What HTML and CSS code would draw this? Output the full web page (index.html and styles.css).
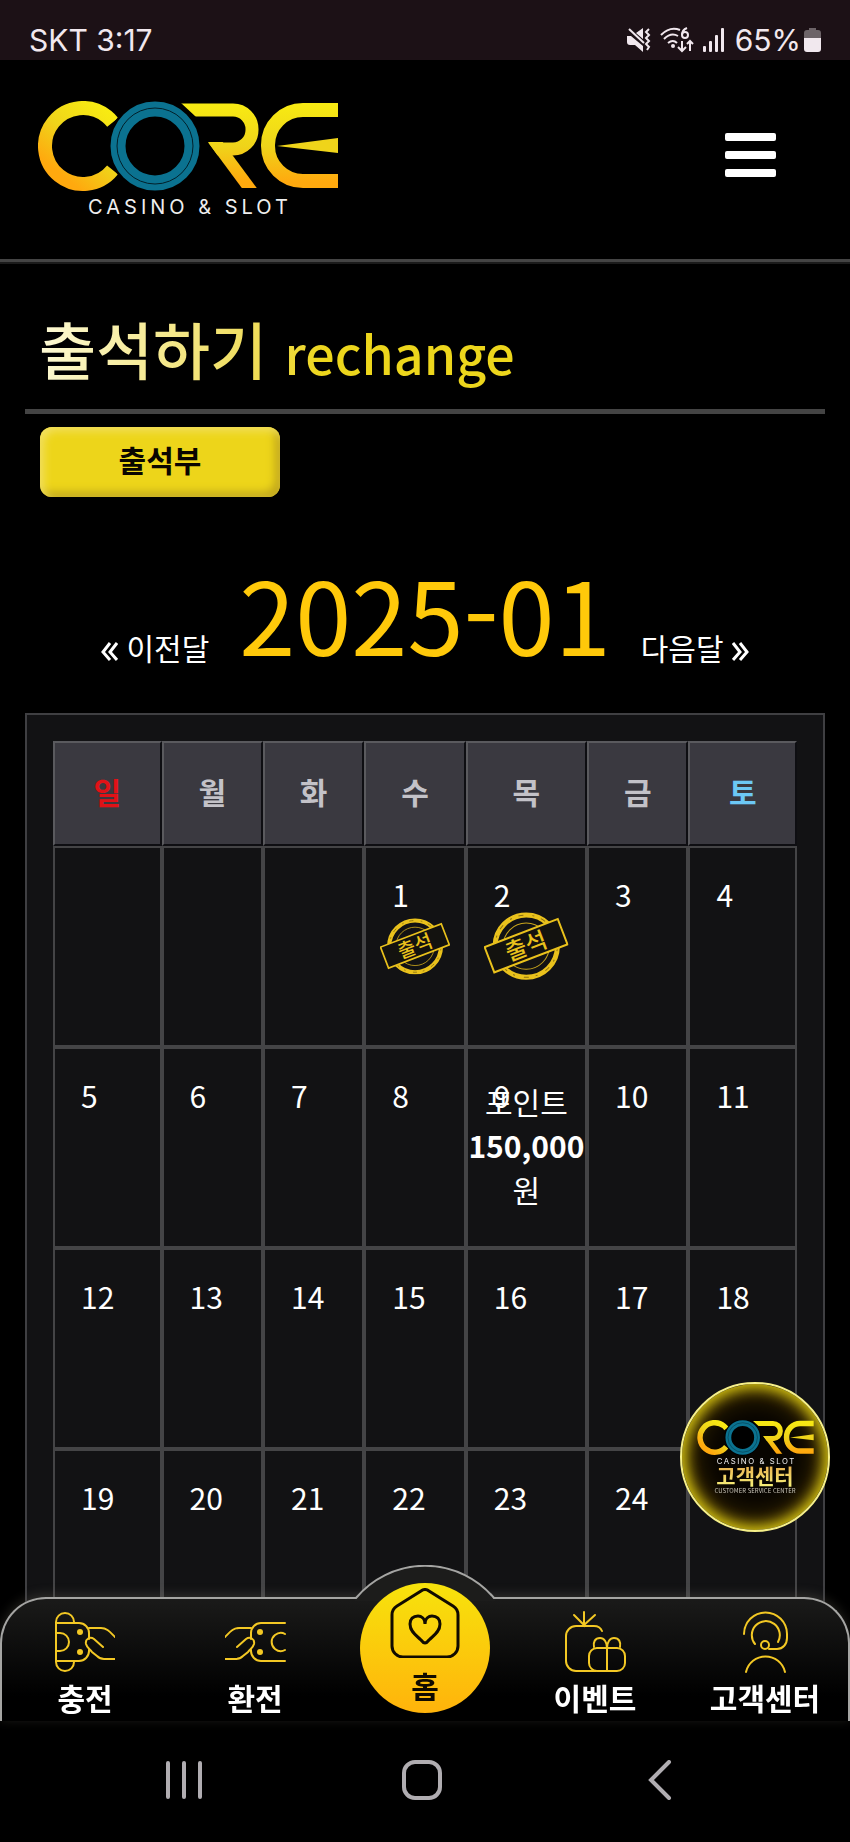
FILE: index.html
```html
<!DOCTYPE html>
<html lang="ko">

<head>
    <meta charset="UTF-8">
    <meta name="viewport" content="width=device-width, initial-scale=1.0">
    <title>출석하기 - CORE</title>
    <link rel="stylesheet" href="styles.css">
</head>

<body>

    <!-- Shared shapes -->
    <svg class="defs" width="0" height="0" aria-hidden="true">
        <defs>
            <linearGradient id="gold" gradientUnits="userSpaceOnUse" x1="0" y1="0" x2="0" y2="90">
                <stop offset="0" stop-color="#f8ec12" />
                <stop offset="0.5" stop-color="#efd41a" />
                <stop offset="0.9" stop-color="#ffa90e" />
            </linearGradient>
            <clipPath id="clip-bowl">
                <polygon points="143,2 250,2 250,55 180,55 170,41 170,30 157,15" />
            </clipPath>
            <clipPath id="clip-leg">
                <rect x="160" y="41" width="70" height="46" />
            </clipPath>
            <clipPath id="clip-bars">
                <rect x="220" y="0" width="80" height="90" />
            </clipPath>
        </defs>
        <symbol id="logo" viewBox="0 0 300 116">
            <g fill="none" stroke="url(#gold)">
                <circle cx="45" cy="45" r="38" stroke-width="14" stroke-dasharray="187 60" transform="rotate(39 45 45)" />
                <rect x="112" y="9" width="102" height="39" rx="19" stroke-width="13" clip-path="url(#clip-bowl)" />
                <line x1="175" y1="38" x2="215" y2="92" stroke-width="12" clip-path="url(#clip-leg)" />
                <rect x="230" y="9" width="120" height="71" rx="35" stroke-width="14" clip-path="url(#clip-bars)" />
            </g>
            <polygon points="239,45 300,37 300,52" fill="#efd41a" />
            <circle cx="117" cy="45" r="47" fill="#000" />
            <circle cx="117" cy="45" r="37" fill="none" stroke="#0b7290" stroke-width="15" />
            <circle cx="117" cy="45" r="38" fill="none" stroke="#02202a" stroke-width="1" />
            <text class="logo-tagline" x="152" y="113" text-anchor="middle">CASINO &amp; SLOT</text>
        </symbol>
        <symbol id="stamp" viewBox="0 0 84 68">
            <circle cx="42" cy="34" r="31" fill="none" stroke="#e9c11c" stroke-width="5" />
            <circle cx="42" cy="34" r="31" fill="none" stroke="#8a7010" stroke-width="1" stroke-dasharray="5 9 2 7" />
            <circle cx="42" cy="34" r="23" fill="none" stroke="#c9a51c" stroke-width="1" />
            <g transform="rotate(-21 42 34)">
                <rect x="3" y="20" width="78" height="27" fill="#13120f" stroke="#e9c11c" stroke-width="2" />
                <text class="stamp-text" x="42" y="42" text-anchor="middle">출석</text>
            </g>
        </symbol>
        <symbol id="hand" viewBox="0 0 60 60">
            <path d="M34 16h12c6 0 9 4 14 9M48 35l-9-8c-4-3-9 0-8 5 1 4 4 5 6 8l5 4c2 2 4 3 7 3h11" />
        </symbol>
    </svg>

    <!-- Phone status bar -->
    <div class="status-bar">
        <span>SKT 3:17</span>
        <div class="status-icons">
            <svg width="24" height="24" viewBox="0 0 24 24" fill="#f1e8ee">
                <path d="M0 8h4l12 10v6L8 17H3q-3 0-3-3zM9 5l7-5v11z" />
                <path d="M2 1l15 14" stroke="#f1e8ee" stroke-width="2" />
                <path d="M22 1l-3 3 3 3-3 3 3 3-3 3 3 3-2 3" fill="none" stroke="#f1e8ee" stroke-width="2" />
            </svg>
            <svg width="34" height="26" viewBox="0 0 34 26" fill="none" stroke="#f1e8ee" stroke-width="2">
                <path d="M1 8Q10-1 20 3M4 12q7-7 14-3M8 16q5-4 9 0" />
                <circle cx="13" cy="19" r="2" fill="#f1e8ee" stroke="none" />
                <circle cx="25" cy="8" r="3" />
                <path d="M27 1q-5 2-5 7M22 14v10M18 20l4 4 4-4M30 24V14M27 17l3-3 3 3" />
            </svg>
            <svg width="22" height="24" viewBox="0 0 22 24" fill="#f1e8ee">
                <rect x="0" y="18" width="3" height="6" rx="1" />
                <rect x="6" y="13" width="3" height="11" rx="1" />
                <rect x="12" y="7" width="3" height="17" rx="1" />
                <rect x="18" y="0" width="3" height="24" rx="1" />
            </svg>
            <span>65%</span>
            <svg width="17" height="24" viewBox="0 0 17 24">
                <path d="M5 0h7v2h2q3 0 3 3v6H0V5q0-3 3-3h2z" fill="#6d6468" />
                <path d="M0 10h17v11q0 3-3 3H3q-3 0-3-3z" fill="#f1e8ee" />
            </svg>
        </div>
    </div>

    <header class="header">
        <a href="#" class="logo" aria-label="CORE">
            <svg width="300" height="116"><use href="#logo" /></svg>
        </a>
        <button type="button" class="menu-btn" aria-label="메뉴">
            <span></span>
            <span></span>
            <span></span>
        </button>
    </header>

    <main class="container">
        <h1><span class="title">출석하기 <small>rechange</small></span></h1>
        <button type="button" class="tab-btn">출석부</button>

        <!-- Month switch -->
        <div class="month">
            <a href="#"><svg width="17" height="19" viewBox="0 0 17 19"><path d="M9 1L2 10l7 8M16 1L9 10l7 8" /></svg> 이전달</a>
            <h2>2025-01</h2>
            <a href="#">다음달 <svg width="17" height="19" viewBox="0 0 17 19"><path d="M1 1l7 9-7 8M8 1l7 9-7 8" /></svg></a>
        </div>

        <!-- Calendar -->
        <div class="calendar">
            <table>
                <colgroup>
                    <col class="col-end">
                    <col>
                    <col>
                    <col>
                    <col class="col-wide">
                    <col>
                    <col class="col-end">
                </colgroup>
                <thead>
                    <tr>
                        <th class="sun">일</th>
                        <th>월</th>
                        <th>화</th>
                        <th>수</th>
                        <th>목</th>
                        <th>금</th>
                        <th class="sat">토</th>
                    </tr>
                </thead>
                <tbody>
                    <tr>
                        <td></td>
                        <td></td>
                        <td></td>
                        <td>1<div class="mark"><svg class="stamp" viewBox="0 0 84 68"><use href="#stamp" /></svg></div></td>
                        <td>2<div class="mark"><svg class="stamp" viewBox="0 0 84 68"><use href="#stamp" /></svg></div></td>
                        <td>3</td>
                        <td>4</td>
                    </tr>
                    <tr>
                        <td>5</td>
                        <td>6</td>
                        <td>7</td>
                        <td>8</td>
                        <td>9<div class="mark point">포인트<b>150,000</b>원</div></td>
                        <td>10</td>
                        <td>11</td>
                    </tr>
                    <tr>
                        <td>12</td>
                        <td>13</td>
                        <td>14</td>
                        <td>15</td>
                        <td>16</td>
                        <td>17</td>
                        <td>18</td>
                    </tr>
                    <tr>
                        <td>19</td>
                        <td>20</td>
                        <td>21</td>
                        <td>22</td>
                        <td>23</td>
                        <td>24</td>
                        <td></td>
                    </tr>
                </tbody>
            </table>
        </div>
    </main>

    <!-- Floating customer center button -->
    <a href="#" class="service">
        <svg width="117" height="45"><use href="#logo" /></svg>
        <strong>고객센터</strong>
        <small>CUSTOMER SERVICE CENTER</small>
    </a>

    <footer class="bottom">
        <nav class="tabbar">
            <svg class="bump" width="140" height="36" viewBox="0 0 140 36" aria-hidden="true">
                <path d="M0 33h1A90 90 0 0 1 139 33h1v3H0z" fill="#1c1c1b" />
                <path d="M0 33h1A90 90 0 0 1 139 33h1" fill="none" stroke="#a5a5a3" stroke-width="2" />
            </svg>
            <a href="#">
                <svg class="icon" width="60" height="60" viewBox="0 0 60 60">
                    <path d="M1 10v40M1 11v-1a9 9 0 0 1 18 0v1M1 49v1a9 9 0 0 0 18 0v-1" />
                    <path d="M1 11h23a10 10 0 0 1 10 10v6M34 38v1a10 10 0 0 1-10 10H1M2 21h3a9 9 0 0 1 0 18H2" />
                    <circle class="dot" cx="25" cy="20" r="3" />
                    <circle class="dot" cx="25" cy="40" r="3" />
                    <use href="#hand" width="60" height="60" />
                </svg>
                충전
            </a>
            <a href="#">
                <svg class="icon" width="60" height="60" viewBox="0 0 60 60">
                    <path d="M60 11H36a10 10 0 0 0-10 10v6M26 38v1a10 10 0 0 0 10 10h24M60 22q-5-3-10 1a9 9 0 0 0 0 14q5 4 10 1" />
                    <circle class="dot" cx="35" cy="20" r="3" />
                    <circle class="dot" cx="35" cy="40" r="3" />
                    <use href="#hand" width="60" height="60" transform="matrix(-1 0 0 1 60 0)" />
                </svg>
                환전
            </a>
            <a href="#" class="home">
                <span class="home-btn">
                    <svg width="70" height="70" viewBox="0 0 70 70">
                        <path d="M2 27q0-6 5-9L31 3q4-3 8 0l24 15q5 3 5 9v31a11 11 0 0 1-11 11H13A11 11 0 0 1 2 58z" />
                        <path d="M35 36c0-6-4-8-7-8-5 0-8 3-8 8 0 8 7 12 11 16 3 4 5 4 8 0 4-4 11-8 11-16 0-5-3-8-8-8-3 0-7 2-7 8z" />
                    </svg>
                    홈
                </span>
            </a>
            <a href="#">
                <svg class="icon" width="60" height="60" viewBox="0 0 60 60">
                    <path d="M19 0v13L9 3M19 13L30 3M37 19q-2-5-8-5H11A10 10 0 0 0 1 24v25a10 10 0 0 0 10 10h20" />
                    <rect x="24" y="36" width="36" height="23" rx="8" />
                    <path d="M42 59V36c0-6-3-10-7-10-5 0-7 4-6 9M42 36c0-6 3-10 7-10 5 0 7 4 6 9" />
                </svg>
                이벤트
            </a>
            <a href="#">
                <svg class="icon" width="60" height="60" viewBox="0 0 60 60">
                    <path d="M9 22a21 21 0 0 1 43 0v4c0 6-4 11-10 11h-8M20 32a14 14 0 1 1 23-2M11 60a20 20 0 0 1 39 0" />
                    <circle cx="30" cy="33" r="4" />
                </svg>
                고객센터
            </a>
        </nav>

        <!-- Android buttons -->
        <div class="system-bar">
            <button type="button" aria-label="최근 앱">
                <svg width="38" height="40" viewBox="0 0 38 40"><path d="M3 3v34M19 3v34M35 3v34" /></svg>
            </button>
            <button type="button" aria-label="홈 화면">
                <svg width="40" height="40" viewBox="0 0 40 40"><rect x="2" y="2" width="36" height="36" rx="11" /></svg>
            </button>
            <button type="button" aria-label="뒤로">
                <svg width="24" height="40" viewBox="0 0 24 40"><path d="M21 2L3 20l18 18" /></svg>
            </button>
        </div>
    </footer>

</body>

</html>
```
FILE: styles.css
```css
* {
    box-sizing: border-box;
}

body {
    font-family: "Noto Sans CJK KR", sans-serif;
    font-size: 30px;
    margin: 0;
    min-height: 100vh;
    background: #000;
    color: #fff;
}

a {
    color: inherit;
    text-decoration: none;
}

button {
    font: inherit;
    border: none;
    padding: 0;
    cursor: pointer;
}

svg {
    display: block;
}

.defs {
    position: absolute;
}

/* Status bar */
.status-bar {
    display: flex;
    justify-content: space-between;
    height: 60px;
    padding: 20px 29px 0 29px;
    background: #1c1116;
    color: #f1e8ee;
    font-family: Inter, sans-serif;
    font-size: 30px;
    line-height: 40px;
}

.status-icons {
    display: flex;
    align-items: center;
    gap: 9px;
}

.status-icons span {
    margin: 0 -6px 0 1px;
}

/* Header */
.header {
    display: flex;
    justify-content: space-between;
    align-items: flex-start;
    height: 202px;
    padding: 41px 74px 0 38px;
    border-bottom: 3px solid #444;
    box-shadow: 0 2px #1b1b1b;
}

.logo-tagline {
    font-family: Inter, sans-serif;
    font-size: 20px;
    letter-spacing: 4px;
    fill: #eee;
}

.menu-btn {
    display: flex;
    flex-direction: column;
    gap: 10px;
    width: 51px;
    margin-top: 32px;
    background: none;
}

.menu-btn span {
    height: 8px;
    border-radius: 2px;
    background: #fff;
}

/* Page title */
.container {
    padding: 40px 25px 0;
}

h1 {
    margin: 0;
    padding: 0 14px 10px;
    border-bottom: 5px solid #444;
    font-size: 62px;
    font-weight: 500;
    line-height: 92px;
}

.title {
    display: inline-block;
    background: linear-gradient(100deg, #fdfad8, #f0dd5c 45%, #edd61c 60%);
    background-clip: text;
    -webkit-background-clip: text;
    color: transparent;
}

.title small {
    font-size: 52px;
}

.tab-btn {
    display: block;
    width: 240px;
    height: 70px;
    margin: 13px 15px 0;
    padding-bottom: 6px;
    border-radius: 12px;
    background: #edd51a;
    box-shadow: inset 4px 4px 8px #f2e060, inset -5px -5px 8px #c0a61c;
    color: #0a0600;
    font-weight: 700;
}

/* Month switch */
.month {
    display: flex;
    justify-content: center;
    align-items: flex-end;
    gap: 30px;
    margin: 42px 0 28px;
}

.month h2 {
    margin: 0;
    color: #ffc90a;
    font-size: 101px;
    font-weight: 400;
    line-height: 146px;
}

.month a {
    margin-bottom: 16px;
    line-height: 44px;
}

.month svg {
    display: inline-block;
    vertical-align: -1px;
    fill: none;
    stroke: #fff;
    stroke-width: 3;
}

/* Calendar */
.calendar {
    padding: 26px;
    border: 2px solid #3f3f42;
    background: #121214;
}

table {
    width: 100%;
    table-layout: fixed;
    border-spacing: 0;
}

.col-end {
    width: 14.6%;
}

.col-wide {
    width: 16.3%;
}

th {
    height: 105px;
    padding: 0 0 6px;
    border: 2px solid;
    border-color: #5a5a5e #0e0e12 #0e0e12 #5a5a5e;
    background: #3a3940;
    color: #c3c2c8;
    font-weight: 700;
}

.sun {
    color: #e01217;
}

.sat {
    color: #6cc8f5;
}

td {
    position: relative;
    height: 201px;
    padding: 24px 0 0 26px;
    border: 2px solid #444446;
    vertical-align: top;
}

/* Sits over the date, centered in the cell */
.mark {
    position: absolute;
    inset: 0;
    display: flex;
    flex-direction: column;
    align-items: center;
    justify-content: center;
    line-height: 44px;
}

.point {
    padding-bottom: 6px;
}

.stamp {
    width: 72%;
}

.stamp-text {
    font-size: 23px;
    font-weight: 500;
    fill: #e9c11c;
}

/* Customer center */
.service {
    position: fixed;
    right: 20px;
    bottom: 310px;
    z-index: 1;
    display: flex;
    flex-direction: column;
    align-items: center;
    width: 150px;
    height: 150px;
    padding-top: 36px;
    border: 2px solid #f6f08a;
    border-radius: 50%;
    background: #080500;
    box-shadow: inset 0 0 14px 4px #d8c712, inset 0 0 30px 6px #5c4300;
}

.service strong {
    margin-top: -2px;
    background: linear-gradient(#e8a94a, #f7f27a);
    background-clip: text;
    -webkit-background-clip: text;
    color: transparent;
    font-size: 21px;
    line-height: 24px;
}

.service small {
    color: #c9c5b8;
    font-size: 6px;
    line-height: 8px;
}

/* Bottom bar */
.bottom {
    position: fixed;
    left: 0;
    right: 0;
    bottom: 0;
    background: linear-gradient(transparent 50px, #000 50px);
}

.tabbar {
    position: relative;
    display: flex;
    height: 124px;
    border-radius: 46px 46px 0 0;
    background: linear-gradient(#1b1b1a, #000 80%);
    box-shadow: 0 -2px 12px rgba(120, 115, 100, 0.3);
}

/* Outline of the bar */
.tabbar::before {
    content: "";
    position: absolute;
    inset: 0;
    border: 2px solid #a5a5a3;
    border-bottom: none;
    border-radius: 46px 46px 0 0;
}

.bump {
    position: absolute;
    left: 50%;
    top: -32px;
    margin-left: -70px;
}

.tabbar a {
    position: relative;
    flex: 1 1 0;
    min-width: 0;
    display: flex;
    flex-direction: column;
    align-items: center;
    padding-top: 15px;
    font-weight: 700;
    line-height: 50px;
    white-space: nowrap;
}

.icon {
    overflow: visible;
    fill: none;
    stroke: #f3c824;
    stroke-width: 2;
    stroke-linecap: round;
}

.dot {
    fill: #f3c824;
    stroke: none;
}

.tabbar .home {
    padding: 0;
}

.home-btn {
    display: flex;
    flex-direction: column;
    align-items: center;
    width: 130px;
    height: 130px;
    margin-top: -14px;
    padding-top: 5px;
    border-radius: 50%;
    background: linear-gradient(#f7e30c, #ffb30b);
    color: #110b00;
    line-height: 54px;
}

.home-btn path {
    fill: none;
    stroke: #110b00;
    stroke-width: 3;
}

/* Android buttons */
.system-bar {
    display: grid;
    grid-template-columns: repeat(3, 1fr);
    justify-items: center;
    align-items: center;
    height: 121px;
    padding: 0 71px 4px 65px;
    background: #000;
}

.system-bar button {
    background: none;
}

.system-bar svg {
    fill: none;
    stroke: #b0adb1;
    stroke-width: 4;
    stroke-linecap: round;
}
```
